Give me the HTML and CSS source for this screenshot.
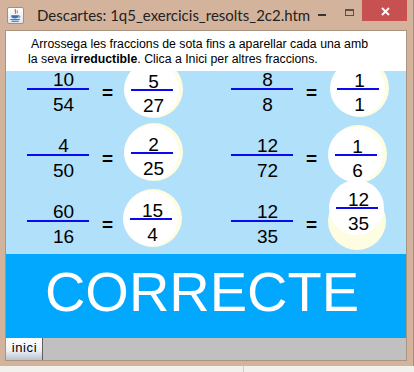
FILE: index.html
```html
<!DOCTYPE html>
<html lang="ca">
<head>
<meta charset="utf-8">
<title>Descartes</title>
<link rel="stylesheet" href="styles.css">
</head>
<body>
<div class="window">
  <div class="titlebar">
    <svg class="app-icon" viewBox="0 0 17 17" width="17" height="17">
      <defs>
        <linearGradient id="ig" x1="0" y1="0" x2="0" y2="1">
          <stop offset="0" stop-color="#ffffff"/>
          <stop offset="1" stop-color="#dfe6ee"/>
        </linearGradient>
      </defs>
      <rect x="0.5" y="0.5" width="16" height="16" rx="1.5" fill="url(#ig)" stroke="#8795a6"/>
      <path d="M8.6 2.2c-1.6 1.4 1.2 2.4-0.4 4.4" stroke="#e3641c" stroke-width="1.3" fill="none"/>
      <path d="M10.4 3.4c-1 1 .9 1.5-.2 2.9" stroke="#e3641c" stroke-width="1" fill="none"/>
      <path d="M4.2 8.2h7.4v1.1c0 1.5-1.7 2.1-3.7 2.1s-3.7-.6-3.7-2.1z" fill="#3b6cb3"/>
      <path d="M11.5 8.6c1.7 0 1.7 2 0 2" stroke="#3b6cb3" stroke-width="0.9" fill="none"/>
      <path d="M3.4 12.6h9.4M4.6 14.3h7" stroke="#3b6cb3" stroke-width="1"/>
    </svg>
    <span class="title">Descartes: 1q5_exercicis_resolts_2c2.htm</span>
    <div class="controls">
      <span class="min"></span>
      <span class="max"></span>
      <span class="close">
        <svg viewBox="0 0 9 9" width="9" height="9"><path d="M1 1L8 8M8 1L1 8" stroke="#fff" stroke-width="1.9"/></svg>
      </span>
    </div>
  </div>
  <div class="client">
    <div class="instructions">
      <p>Arrossega les fraccions de sota fins a aparellar cada una amb<br>la seva <b>irreductible</b>. Clica a Inici per altres fraccions.</p>
    </div>
    <div class="canvas">
      <div class="grid">
        <div class="eq">
          <div class="frac"><span class="num">10</span><span class="bar"></span><span class="den">54</span></div>
          <span class="equals">=</span>
          <div class="slot">
            <span class="shade s1"></span>
            <div class="disc d1"><div class="frac"><span class="num">5</span><span class="bar"></span><span class="den">27</span></div></div>
          </div>
        </div>
        <div class="eq">
          <div class="frac"><span class="num">8</span><span class="bar"></span><span class="den">8</span></div>
          <span class="equals">=</span>
          <div class="slot">
            <span class="shade s4"></span>
            <div class="disc d4"><div class="frac"><span class="num">1</span><span class="bar"></span><span class="den">1</span></div></div>
          </div>
        </div>
        <div class="eq">
          <div class="frac"><span class="num">4</span><span class="bar"></span><span class="den">50</span></div>
          <span class="equals">=</span>
          <div class="slot">
            <span class="shade s2"></span>
            <div class="disc d2"><div class="frac"><span class="num">2</span><span class="bar"></span><span class="den">25</span></div></div>
          </div>
        </div>
        <div class="eq">
          <div class="frac"><span class="num">12</span><span class="bar"></span><span class="den">72</span></div>
          <span class="equals">=</span>
          <div class="slot">
            <span class="shade s5"></span>
            <div class="disc d5"><div class="frac"><span class="num">1</span><span class="bar"></span><span class="den">6</span></div></div>
          </div>
        </div>
        <div class="eq">
          <div class="frac"><span class="num">60</span><span class="bar"></span><span class="den">16</span></div>
          <span class="equals">=</span>
          <div class="slot">
            <span class="shade s3"></span>
            <div class="disc d3"><div class="frac"><span class="num">15</span><span class="bar"></span><span class="den">4</span></div></div>
          </div>
        </div>
        <div class="eq">
          <div class="frac"><span class="num">12</span><span class="bar"></span><span class="den">35</span></div>
          <span class="equals">=</span>
          <div class="slot">
            <span class="shade s6"></span>
            <div class="disc d6"><div class="frac"><span class="num">12</span><span class="bar"></span><span class="den">35</span></div></div>
          </div>
        </div>
      </div>
    </div>
    <div class="result">CORRECTE</div>
    <div class="toolbar"><button class="btn" type="button">inici</button></div>
  </div>
</div>
<div class="desk"><span class="desk-edge"></span></div>
</body>
</html>
```

FILE: styles.css
```css
* { box-sizing: border-box; margin: 0; padding: 0; }
html, body { width: 414px; height: 372px; overflow: hidden; }
body { background: #f2f1ed; font-family: "Liberation Sans", Arial, sans-serif; color: #000; }

.window {
  width: 414px;
  height: 366px;
  background: #d4b39c;
  border-right: 1px solid #a38c7b;
  display: flex;
  flex-direction: column;
}

.titlebar { height: 31px; display: flex; align-items: flex-start; flex: none; }
.app-icon { margin: 7px 0 0 7px; flex: none; }
.title { margin: 5px 0 0 13px; font: 15px/20px Lato, "Noto Sans", sans-serif; color: #222; white-space: nowrap; }
.controls { margin-left: auto; display: flex; align-items: flex-start; }
.min { width: 8px; height: 2px; background: #333; margin: 14px 19px 0 0; }
.max { width: 9px; height: 7px; border: 1px solid #5b514a; border-top-width: 2px; margin: 9px 8px 0 0; }
.close {
  width: 45px; height: 21px; background: #c75050; margin-right: 6px;
  display: flex; align-items: center; justify-content: center; padding: 1px 0 0 2px;
}
.close svg { display: block; }

.client {
  margin: 0 7px 0 6px;
  width: 400px;
  height: 329px;
  background: #fff;
  box-shadow: 0 0 0 1px #a99482;
  display: flex;
  flex-direction: column;
}

.instructions { height: 40px; padding: 6px 0 0 22px; font-size: 12.3px; line-height: 15px; flex: none; }
.instructions p { text-indent: 3px; }

.canvas { height: 183px; background: #b1e0fb; padding-left: 21px; flex: none; }
.grid { display: grid; grid-template-columns: 204px 175px; row-gap: 24px; }
.eq { display: flex; align-items: center; height: 42px; }

.frac { display: flex; flex-direction: column; width: 62px; flex: none; }
.num, .den { display: block; height: 17px; line-height: 17px; font-size: 19px; text-align: center; padding-left: 11px; }
.bar { display: block; height: 2px; background: #0a0aec; margin-bottom: 6px; }
.equals { font-weight: bold; font-size: 19px; line-height: 19px; width: 11px; margin-left: 13px; flex: none; }

.slot { position: relative; width: 60px; height: 42px; flex: none; }
.shade { position: absolute; width: 58px; height: 58px; border-radius: 50%; background: #fefde2; }
.disc {
  position: absolute; width: 55px; height: 55px; border-radius: 50%; background: #fff;
  display: flex; justify-content: center; align-items: flex-start;
}
.disc .frac { width: 42px; margin-top: 12px; }
.disc .num, .disc .den { height: 15px; line-height: 15px; padding-left: 4px; }
.disc .bar { margin-bottom: 7px; }

/* first-row discs are cut by the top edge of the blue canvas */
.d1 { left: 11px; top: -9px; clip-path: inset(9px 0 0 0); }
.s1 { left: 12px; top: -11px; clip-path: inset(11px 0 0 0); }
.d4 { left: 13px; top: -10px; clip-path: inset(10px 0 0 0); }
.s4 { left: 14px; top: -12px; clip-path: inset(12px 0 0 0); }
.d2 { left: 11px; top: -12px; }  .s2 { left: 12px; top: -14px; }
.d3 { left: 10px; top: -12px; }  .s3 { left: 11px; top: -14px; }
.d5 { left: 11px; top: -10px; }  .s5 { left: 12px; top: -12px; }
.d6 { left: 12px; top: -23px; }  .s6 { left: 11px; top: -11px; }

.result {
  height: 84px; flex: none; background: #02a8fe; color: #fff;
  font-size: 56px; line-height: 56px; padding: 10px 8px 0 0; text-align: center;
}

.toolbar { height: 22px; flex: none; background: #c0c0c0; display: flex; }
.btn {
  width: 37px; height: 22px; border: none; border-right: 1px solid #5e5e5e;
  background: linear-gradient(#fdfeff 0%, #eef2f8 55%, #b9c2ce 100%);
  font: 13px/19px "Liberation Sans", Arial, sans-serif; color: #000;
  padding: 0 0 3px 1px; letter-spacing: 0.6px;
}

.desk { height: 6px; position: relative; display: flex; }
.desk-edge { margin-left: 243px; width: 1px; height: 6px; background: #cfcfcc; }
```
